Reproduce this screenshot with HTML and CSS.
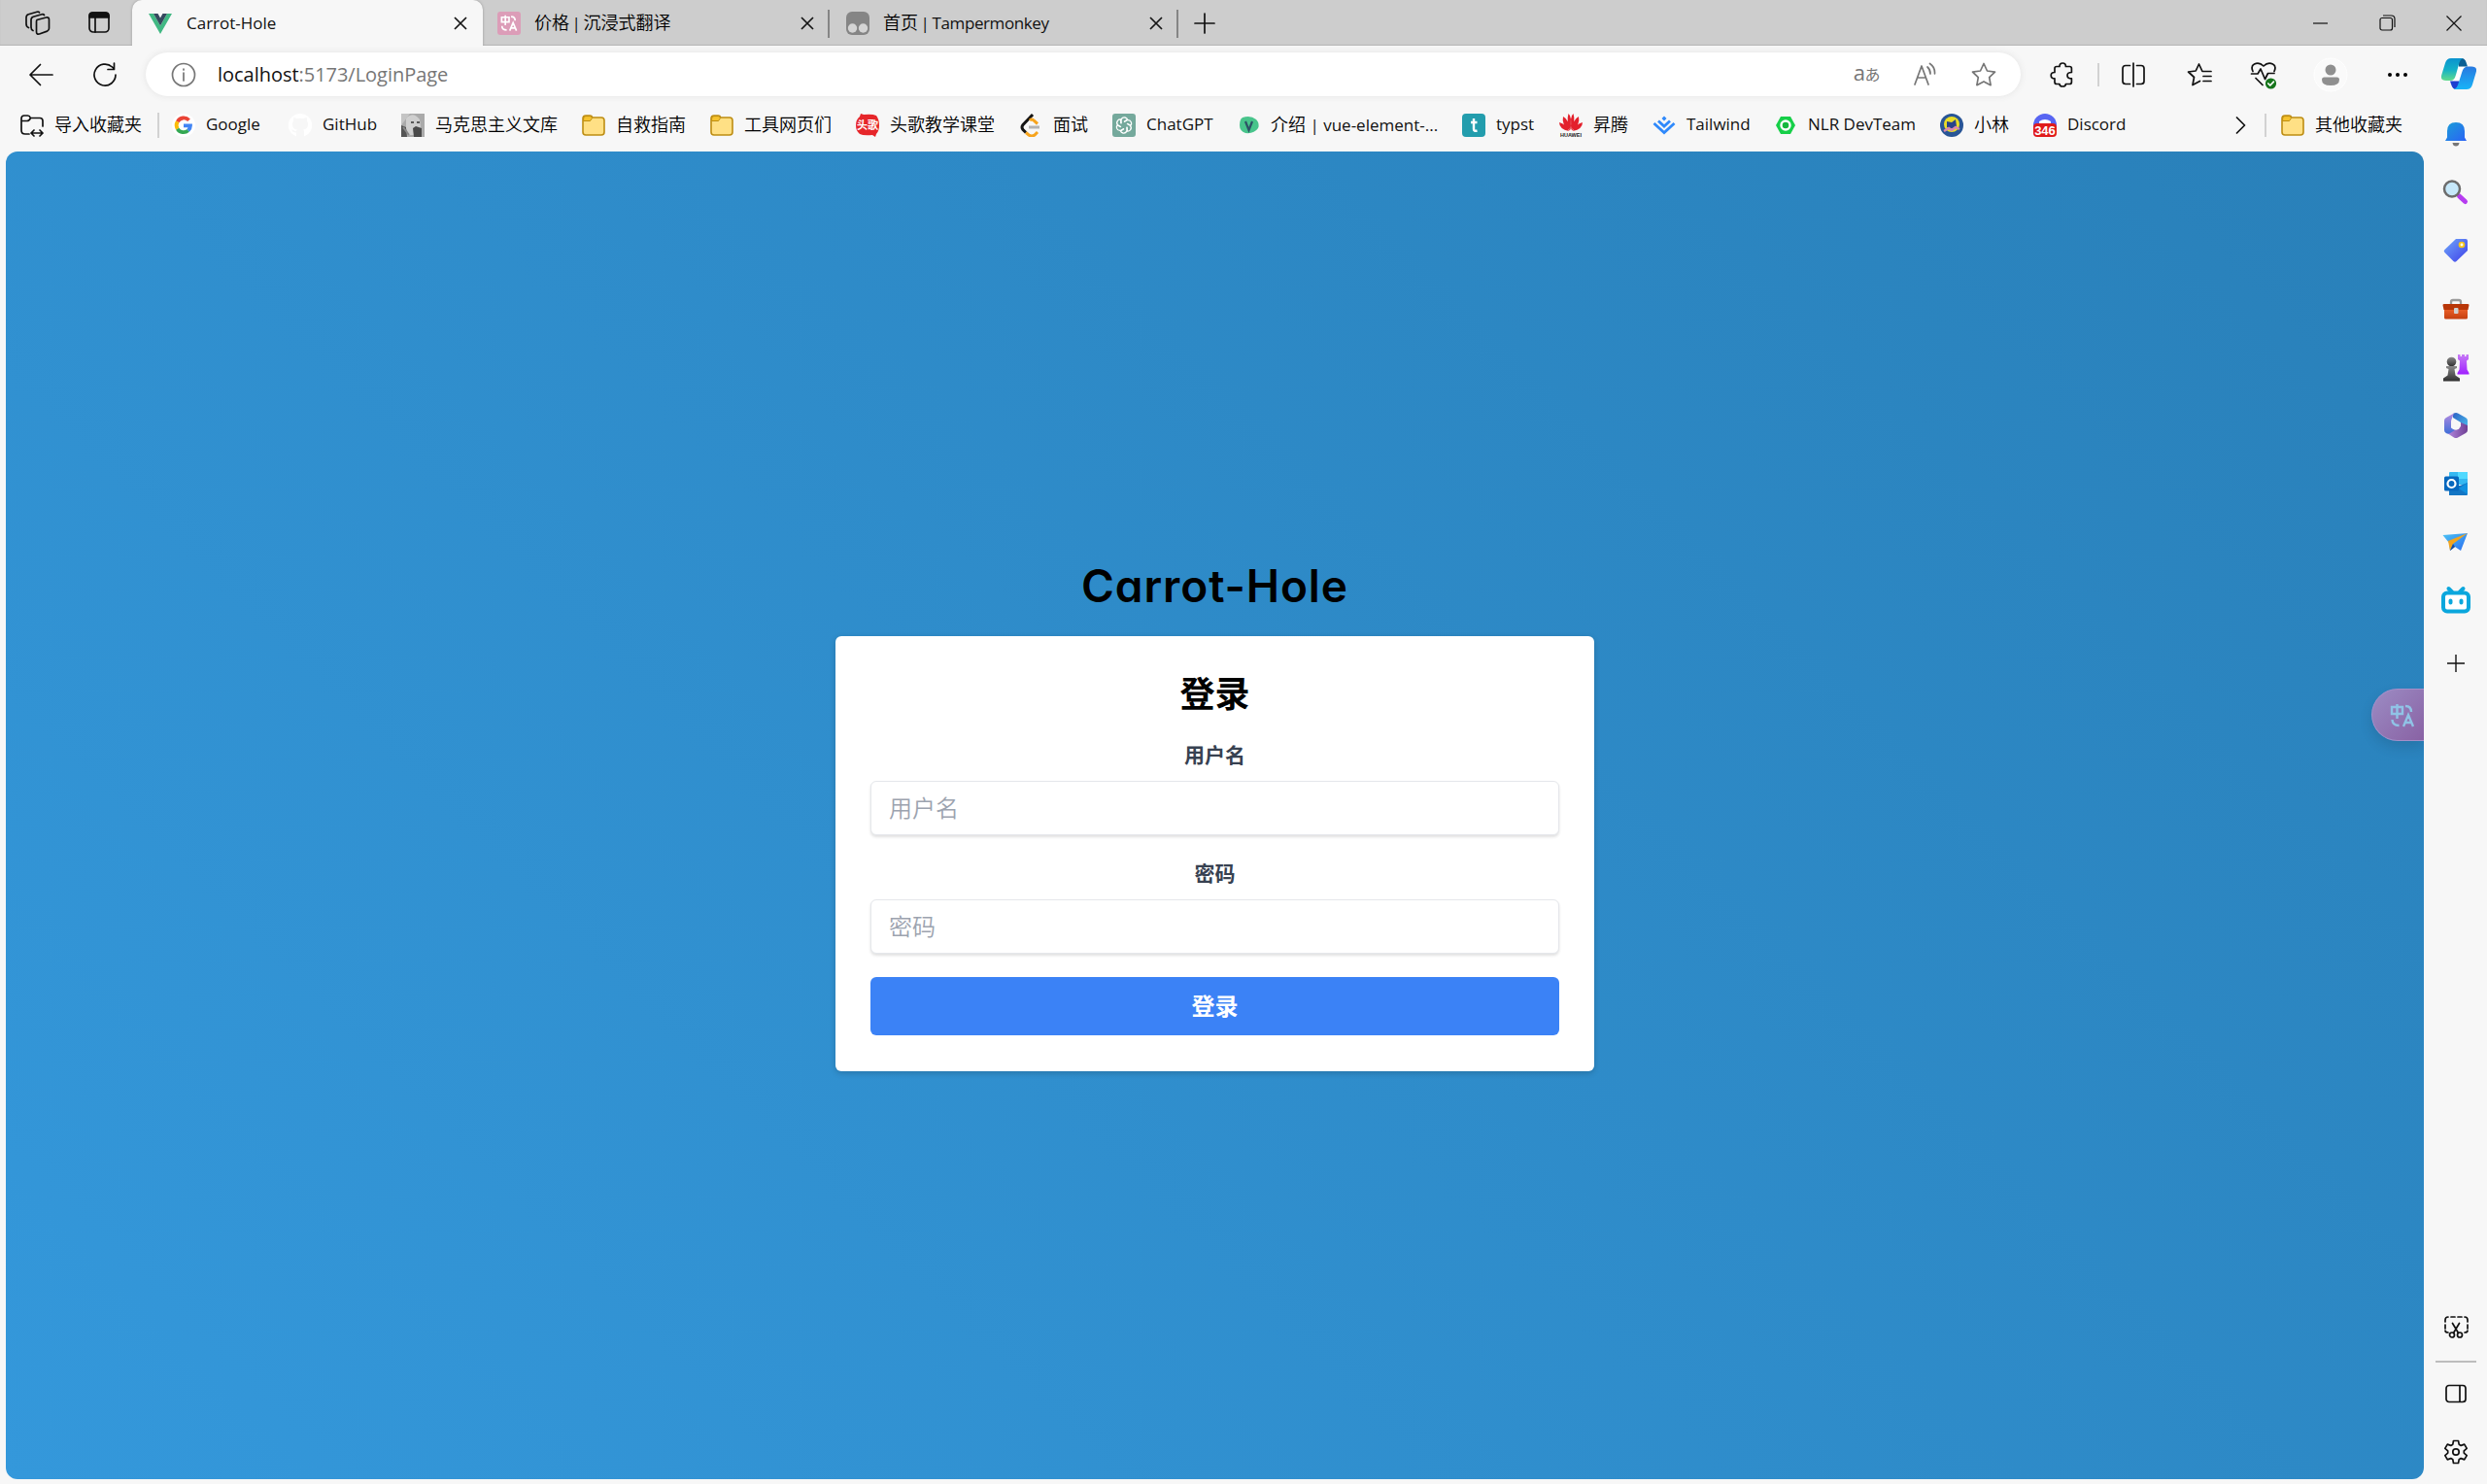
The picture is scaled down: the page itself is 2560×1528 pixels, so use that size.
FILE: index.html
```html
<!DOCTYPE html>
<html lang="zh-CN">
<head>
<meta charset="utf-8">
<title>Carrot-Hole</title>
<link rel="stylesheet" href="styles.css">
</head>
<body>
<svg class="defs" width="0" height="0">
  <defs>
    <linearGradient id="g-bell" x1="0" y1="0" x2="1" y2="1"><stop offset="0" stop-color="#1a9fd8"/><stop offset="1" stop-color="#2b62f5"/></linearGradient>
    <linearGradient id="g-tag" x1="0" y1="0" x2="1" y2="1"><stop offset="0" stop-color="#6fa8fb"/><stop offset="1" stop-color="#3f3fe8"/></linearGradient>
    <linearGradient id="g-box" x1="0" y1="0" x2="0" y2="1"><stop offset="0" stop-color="#f0642c"/><stop offset="1" stop-color="#c43f10"/></linearGradient>
    <linearGradient id="g-rook" x1="0" y1="0" x2="0" y2="1"><stop offset="0" stop-color="#c67af5"/><stop offset="1" stop-color="#a020ff"/></linearGradient>
    <linearGradient id="g-pawn" x1="0" y1="0" x2="0" y2="1"><stop offset="0" stop-color="#8a8a8a"/><stop offset="1" stop-color="#303030"/></linearGradient>
    <linearGradient id="g-cop1" x1="0" y1="0" x2="0" y2="1"><stop offset="0" stop-color="#0a92cf"/><stop offset=".5" stop-color="#12b0c8"/><stop offset="1" stop-color="#62dc8c"/></linearGradient>
    <linearGradient id="g-cop2" x1="0" y1="0" x2="0" y2="1"><stop offset="0" stop-color="#2878e0"/><stop offset="1" stop-color="#18b4f8"/></linearGradient>
    <linearGradient id="g-365a" x1="0" y1="0" x2="0" y2="1"><stop offset="0" stop-color="#b48ae0"/><stop offset="1" stop-color="#3f6fd8"/></linearGradient>
    <linearGradient id="g-365b" x1="0" y1="0" x2="1" y2="1"><stop offset="0" stop-color="#2c62c4"/><stop offset="1" stop-color="#4fc3f0"/></linearGradient>
    <linearGradient id="g-365c" x1="0" y1="0" x2="1" y2="0"><stop offset="0" stop-color="#b48ae0"/><stop offset="1" stop-color="#6f3f94"/></linearGradient>
    <linearGradient id="g-plane" x1="0" y1="0" x2="1" y2="1"><stop offset="0" stop-color="#4cc4f4"/><stop offset="1" stop-color="#2a6cf0"/></linearGradient>
    <symbol id="folder" viewBox="0 0 24 24"><path d="M1 5Q1 2 4 2h4.500q1.500 0 2.500 2h9q3 0 3 3v12q0 3-3 3H4q-3 0-3-3z" fill="#ffe085" stroke="#bd8d12" stroke-width="1.600"/><path d="M1.600 7.500V5Q1.600 2.600 4 2.600h4.200q1.300 0 2.300 2L8.500 7.500z" fill="#f6c32e" stroke="#bd8d12" stroke-width="1"/></symbol>
    <symbol id="close" viewBox="0 0 14 14"><path d="M1 1l12 12M13 1L1 13" fill="none" stroke="#151515" stroke-width="1.700"/></symbol>
    <symbol id="translate" viewBox="0 0 26 26"><path d="M2 4h11v7H2zM7.500 1v15M16 3q6 0 6 6M2.500 17q0 6 7 6M14 24l5-12 5 12M16 20h6" fill="none" stroke="currentColor" stroke-width="2.400"/></symbol>
  </defs>
</svg>
<div class="browser">
  <header class="tabs">
    <div class="tab-tools">
      <svg width="26" height="25" viewBox="0 0 26 25" class="line"><path d="M12 9.500l9.500-2.500q3-.7 3 2.300v9q0 2-2 2.800L14.500 24q-3 .7-3-2.300V11.500q0-1.500.5-2z"/><path d="M8 20.500q-2-.8-2-3.500V9.500q0-2.400 2.300-3.200L17 3.800q1.800-.5 2.500.7M3.500 17.500Q1 16.500 1 13.500V7q0-2.400 2.300-3.200L12 1.200q1.800-.5 2.500.6"/></svg>
      <svg width="24" height="24" viewBox="0 0 24 24" class="line"><rect x="2" y="2" width="20" height="20" rx="4"/><path d="M2 7V5q0-3 3-3h14q3 0 3 3v2z" fill="#111"/><path d="M8 7v15"/></svg>
    </div>
    <div class="tab active">
      <svg width="24" height="24" viewBox="0 0 24 24"><path d="M0 2h5l7 12.500L19 2h5L12 23z" fill="#41b883"/><path d="M5 2h4.500L12 6.500 14.500 2H19l-7 12.500z" fill="#35495e"/></svg>
      <span>Carrot-Hole</span><svg class="x" width="14" height="14"><use href="#close"/></svg>
    </div>
    <div class="tab">
      <svg width="24" height="24" viewBox="0 0 24 24" color="#fff"><rect width="24" height="24" rx="3" fill="#dc9db8"/><use href="#translate" x="3" y="3" width="18" height="18"/></svg>
      <span class="tight"><b>价格</b> | <b>沉浸式翻译</b></span><svg class="x" width="14" height="14"><use href="#close"/></svg>
    </div>
    <div class="tab">
      <svg width="24" height="24" viewBox="0 0 24 24"><rect width="24" height="24" rx="6" fill="#858585"/><circle cx="6.500" cy="17" r="4.700" fill="#d4d4d4"/><circle cx="17.500" cy="17" r="4.700" fill="#d4d4d4"/></svg>
      <span class="tight"><b>首页</b> | <i>Tampermonkey</i></span><svg class="x" width="14" height="14"><use href="#close"/></svg>
    </div>
    <svg class="new-tab line" width="22" height="22" viewBox="0 0 22 22"><path d="M11 1v20M1 11h20"/></svg>
    <div class="window-buttons">
      <svg width="16" height="16" viewBox="0 0 16 16" class="thin"><path d="M0 8h15"/></svg>
      <svg width="17" height="17" viewBox="0 0 17 17" class="thin"><rect x="1" y="3.500" width="12.500" height="12.500" rx="2"/><path d="M4 1h8.500q3.500 0 3.500 3.500V13"/></svg>
      <svg width="16" height="16" viewBox="0 0 16 16" class="thin"><path d="M.5.5l15 15M15.500.5l-15 15"/></svg>
    </div>
  </header>

  <div class="toolbar">
    <svg class="back line" width="26" height="24" viewBox="0 0 26 24"><path d="M25 12H2M12.500 1.500L2 12l10.500 10.500"/></svg>
    <svg class="reload line" width="26" height="26" viewBox="0 0 26 26"><path d="M24 13A11 11 0 1 1 20.500 5L22 6.500M22.500 1v6.500H16"/></svg>
    <div class="address">
      <svg width="26" height="26" viewBox="0 0 26 26" class="line gray"><circle cx="13" cy="13" r="11.500"/><path d="M13 11v8M13 7v1"/></svg>
      <span class="url">localhost<i>:5173/LoginPage</i></span>
      <span class="aa">a<b>あ</b></span>
      <svg class="read line gray" width="25" height="25" viewBox="0 0 25 25"><path d="M1 23L8 4l7 19M3.500 16h9M14 5q3 2.500 3 7M16.500 1.500Q22 5 21.500 12"/></svg>
      <svg class="line gray" width="26" height="26" viewBox="0 0 26 26"><path d="M13 1.500l3.500 7.500 8 1.100-5.800 5.600 1.400 8L13 19.900l-7.100 3.800 1.400-8L1.500 10.100l8-1.100z"/></svg>
    </div>
    <div class="tools">
      <svg width="26" height="26" viewBox="0 0 26 26" class="line"><path d="M7 4.500h3q0-3.500 3.200-3.500t3.200 3.500h4q2 0 2 2v4q-4.400 0-4.400 3.200t4.400 3.200v3.600q0 2-2 2h-4q0 2.500-3.200 2.500T10 22.500H7q-2 0-2-2v-3.600q-3.800 0-3.800-3.200T5 10.500v-4q0-2 2-2z"/></svg>
      <i class="rule"></i>
      <svg width="26" height="26" viewBox="0 0 26 26" class="line"><path d="M13 1v24M9.500 3.500H5Q2 3.500 2 6.500v13q0 3 3 3h4.500M16.500 3.500H21q3 0 3 3v13q0 3-3 3h-4.500"/></svg>
      <svg width="26" height="26" viewBox="0 0 26 26" class="line"><path d="M13.500 19.500L6 23.500l1.500-8L1.500 10l7.700-1L12.500 2 16 9.500h9M17 14.500h8M17 19.500h8"/></svg>
      <svg width="28" height="30" viewBox="0 0 28 30" class="line"><path d="M3 11.500Q.5 6 4.500 4q5-2.500 9.500 2 4.500-4.500 9.500-2 4 2 1.500 7.500M1.500 14h6.500l3-5 4.500 10.500 3-6H25M6 18.500l7 7"/><circle cx="21.500" cy="24" r="5.600" fill="#16751b" stroke="none"/><path d="M18.800 24l2 2 3.600-3.800" stroke="#fff"/></svg>
      <svg width="36" height="36" viewBox="0 0 36 36"><circle cx="18" cy="18" r="17" fill="#fafafa" stroke="#fff"/><circle cx="18" cy="13" r="5.500" fill="#8f8f8f"/><path d="M9 23q0-2.500 2.500-2.500h13q2.500 0 2.500 2.500 0 6-9 6t-9-6z" fill="#8f8f8f"/></svg>
      <svg width="22" height="6" viewBox="0 0 22 6"><circle cx="3" cy="3" r="2"/><circle cx="11" cy="3" r="2"/><circle cx="19" cy="3" r="2"/></svg>
      <svg width="36" height="34" viewBox="0 0 36 34"><path d="M16 9h8l-5 14h-8z" fill="#fff"/><path d="M18 0h3q3 0 4.500 4L27 8.500h-9z" fill="#0b5f94"/><path d="M10 0h12q-2.500 1-3.500 4.500L15 17q-1.500 6-5.500 6H5q-6.500 0-4.700-6L4 5q1.500-5 6-5z" fill="url(#g-cop1)"/><path d="M18 32h-3q-3 0-4.500-4L9 23.500h9z" fill="#1c3fd0"/><path d="M26 32H13q3-1 4-4.500L21 15q1.500-6.500 6-6.500h4q6.500 0 4.700 6L32 27q-1.500 5-6 5z" fill="url(#g-cop2)"/></svg>
    </div>
  </div>

  <nav class="bookmarks">
    <a class="ruled"><svg width="24" height="24" viewBox="0 0 24 24" class="line"><path d="M9 21H5q-4 0-4-4V5q0-3 3-3h3.500q2 0 3 2.500h9.500q3 0 3 3V13M1.500 7.500H7q2 0 3.500-3M11 20h12M14 17l-3 3 3 3M20 17l3 3-3 3"/></svg><b>导入收藏夹</b></a>
    <a><svg width="24" height="24" viewBox="0 0 24 24"><circle cx="12" cy="12" r="12" fill="#fff"/><g fill="none" stroke-width="3.800"><path d="M17.500 6.800A7.300 7.300 0 0 0 5.700 8.300" stroke="#ea4335"/><path d="M5.700 8.300a7.300 7.300 0 0 0 0 7.400" stroke="#fbbc05"/><path d="M5.700 15.700a7.300 7.300 0 0 0 11 1.700" stroke="#34a853"/><path d="M16.700 17.400A7 7 0 0 0 19 12.300h-7" stroke="#4285f4"/></g></svg>Google</a>
    <a><svg width="24" height="24" viewBox="0 0 24 24"><path d="M12 0a12 12 0 0 0-4 23.400v-4c-4 .5-4-2-5-2.800 2-.5 3 2 5 1.500q0-1 .8-1.700C5 16 4 13.500 4 10.500q0-2 1.200-3.300-.4-1.500.2-3.200 2 .2 3.600 1.200 3-.8 6 0Q16.600 4.200 18.600 4q.6 1.700.2 3.200Q20 8.500 20 10.500c0 3-1 5.500-4.800 5.900q.8.800.8 2.500v4.500A12 12 0 0 0 12 0z" fill="#fff"/></svg>GitHub</a>
    <a><svg width="24" height="24" viewBox="0 0 24 24"><rect width="24" height="24" fill="#aaa"/><path d="M0 12l5 2 1 10H0z" fill="#555"/><path d="M5 5q7-8 14 1l1 8-5 8H8L5 15z" fill="#cfcfcf"/><path d="M12 15l3-2 6 2v9h-8z" fill="#4a4a4a"/><path d="M10 9h3M16 9h3" stroke="#333" stroke-width="1.500"/><path d="M0 0h9L3 8 0 12z" fill="#c4c4c4"/><path d="M2 14l6 8" stroke="#888" stroke-width="2"/></svg><b>马克思主义文库</b></a>
    <a><svg width="24" height="24"><use href="#folder"/></svg><b>自救指南</b></a>
    <a><svg width="24" height="24"><use href="#folder"/></svg><b>工具网页们</b></a>
    <a><svg width="24" height="24" viewBox="0 0 24 24"><path d="M5 0l3 1q9-1 13 1 3 4 3 10t-3 9l-1 3-3-2q-9 1-13-1-4-3-4-9T4 3z" fill="#e6262a"/><text x="12" y="16" text-anchor="middle" class="fav-cjk">头歌</text></svg><b>头歌教学课堂</b></a>
    <a><svg width="24" height="24" viewBox="0 0 24 24" fill="none" stroke-width="3"><path d="M14 1L4 11.500q-2 2.500 0 5l3 3" stroke="#151515"/><path d="M11 7q2-2 4 0l4 3.500M7 19.500l3 2.500q3 2 6 0l3-3" stroke="#f7a41d"/><path d="M10 14h11" stroke="#b3b3b3"/></svg><b>面试</b></a>
    <a><svg width="24" height="24" viewBox="0 0 24 24"><rect width="24" height="24" rx="3" fill="#75a99c"/><g fill="none" stroke="#fff" stroke-width="1.300"><path id="petal" d="M9 10.200V6.500Q10 3.500 13 4q2 .5 2.500 2L12 8.500"/><use href="#petal" transform="rotate(60 12 12)"/><use href="#petal" transform="rotate(120 12 12)"/><use href="#petal" transform="rotate(180 12 12)"/><use href="#petal" transform="rotate(240 12 12)"/><use href="#petal" transform="rotate(300 12 12)"/></g></svg>ChatGPT</a>
    <a><svg width="24" height="24" viewBox="0 0 24 24"><path d="M6 4q8-3 14 2 4 4 2 9-4 6-13 5-6-2-6-8t3-8z" fill="#48c48b"/><path d="M9 8l3.500 9L16 8" fill="none" stroke="#2d5265" stroke-width="2.200"/></svg><span><b>介绍</b> | vue-element-...</span></a>
    <a><svg width="24" height="24" viewBox="0 0 24 24"><rect width="24" height="24" rx="4" fill="#239dad"/><path d="M12 5v11q0 2.500 3.500 1.500M9 9h6.500" fill="none" stroke="#fff" stroke-width="2.400"/></svg>typst</a>
    <a><svg width="24" height="24" viewBox="0 0 24 24"><g fill="#e3202c"><path d="M11.500 17Q7 8 9.500 0q4 3 2 17zM12.500 17Q17 8 14.500 0q-4 3-2 17zM11 17.500Q2 12 4 3q6 3 7 14.500zM13 17.500Q22 12 20 3q-6 3-7 14.500zM10 18Q0 16 0 9q7 2 10 9zM14 18q10-2 10-9-7 2-10 9z"/></g><text x="12" y="24" text-anchor="middle" class="fav-huawei">HUAWEI</text></svg><b>昇腾</b></a>
    <a><svg width="24" height="24" viewBox="0 0 24 24" fill="none" stroke="#2f89fb" stroke-width="2.800"><path d="M1.500 10L12 19.500 22.500 10M6 7.500l6 5.500 6-5.500"/><path d="M12 2.500l2.500 2.500L12 7.500 9.500 5z" fill="#2f89fb" stroke="none"/></svg>Tailwind</a>
    <a><svg width="24" height="24" viewBox="0 0 24 24"><path d="M7 3h10l5 9-5 9H7l-5-9z" fill="#16cf48"/><circle cx="12" cy="12" r="4.500" fill="#16b83e" stroke="#fff" stroke-width="2.400"/></svg>NLR DevTeam</a>
    <a><svg width="24" height="24" viewBox="0 0 24 24"><circle cx="12" cy="12" r="12" fill="#285596"/><circle cx="12" cy="11" r="8" fill="#e9dc27"/><path d="M7 8l5 1 4-3 1 7-4 3-6-2z" fill="#28448a"/><path d="M4 18l5-3 3 2 4-3 4 2" stroke="#d887ad" stroke-width="2.400" fill="none"/></svg><b>小林</b></a>
    <a><svg width="24" height="24" viewBox="0 0 24 24"><circle cx="12" cy="12" r="12" fill="#5865f2"/><path d="M6 8q6-4 12 0v4H6z" fill="#fff"/><rect y="10" width="24" height="14" rx="4" fill="#e01b1b"/><text x="12" y="22" text-anchor="middle" class="fav-badge">346</text></svg>Discord</a>
    <svg class="line more" width="11" height="18" viewBox="0 0 11 18"><path d="M1.500 1L9.500 9l-8 8"/></svg>
    <i class="rule"></i>
    <a><svg width="24" height="24"><use href="#folder"/></svg><b>其他收藏夹</b></a>
  </nav>

  <main class="page">
    <h1>Carrot-Hole</h1>
    <form class="card">
      <h2>登录</h2>
      <label for="user">用户名</label>
      <input id="user" type="text" placeholder="用户名">
      <label for="pass">密码</label>
      <input id="pass" type="password" placeholder="密码">
      <button type="button">登录</button>
    </form>
    <div class="float"><svg width="26" height="26"><use href="#translate"/></svg></div>
  </main>

  <aside class="sidebar">
    <svg width="30" height="30" viewBox="0 0 30 30"><path d="M4 22l2-3.500V12q0-9 9-9t9 9v6.500L26 22z" fill="url(#g-bell)"/><path d="M11.500 24h7q-.5 3.500-3.500 3.500T11.500 24z" fill="#777"/></svg>
    <svg width="30" height="30" viewBox="0 0 30 30"><path d="M18.500 19l6 5.500" stroke="#b63cf0" stroke-width="5" stroke-linecap="round"/><circle cx="11" cy="11.500" r="8" fill="#c6e8fa" stroke="#6c6c6c" stroke-width="2.500"/></svg>
    <svg width="30" height="30" viewBox="0 0 30 30"><path d="M15 3h10q2 0 2 2v10L15.500 26q-1.500 1.500-3 0l-9-9q-1.500-1.500 0-3z" fill="url(#g-tag)"/><circle cx="21" cy="9" r="2.400" fill="#fff" stroke="#f3c51c" stroke-width="1.900"/></svg>
    <svg width="30" height="30" viewBox="0 0 30 30"><path d="M10 10V8q0-2 2-2h6q2 0 2 2v2" fill="none" stroke="#9a9a9a" stroke-width="2.300"/><path d="M3 14h24v10q0 1.500-1.500 1.500h-21Q3 25.500 3 24z" fill="url(#g-box)"/><path d="M1.500 11q0-1 1.500-1h24q1.500 0 1.500 1l-1 5h-25z" fill="#b83608"/><rect x="13" y="14" width="4.500" height="6" rx="1" fill="#d0d0d0"/></svg>
    <svg width="30" height="30" viewBox="0 0 30 30"><path d="M17 2h2.500v2H21V2h3v2h1.500V2H28v5l-2 1.500.5 9L28.500 21v1.500h-12V21l2-3.500.5-9L17 7z" fill="url(#g-rook)"/><circle cx="10.500" cy="9.500" r="4.800" fill="url(#g-pawn)"/><path d="M5 14h11v2l-2.500 1 1 6.500 4.500 3v3H2v-3l4.500-3 1-6.500L5 16z" fill="url(#g-pawn)"/></svg>
    <svg width="30" height="30" viewBox="0 0 30 30"><path d="M12 3q3-1.500 5-.5l8 4.500q2 1 2 3v10l-7-4V12l-8-5z" fill="url(#g-365b)"/><path d="M27 15v5q0 2-2 3l-8 4.500q-2 1-4 0L6 23l14-7v-4z" fill="url(#g-365c)"/><path d="M13 2.500L5 7Q3 8 3 10v10q0 2 2 3 2 1 4 0l5-3-4-2.500V12q0-2.500 1-4.500z" fill="url(#g-365a)"/><circle cx="15" cy="15" r="4.700" fill="#f7f7f7"/></svg>
    <svg width="30" height="30" viewBox="0 0 30 30"><path d="M8 4q0-1 1-1h17q1 0 1 1v12H8z" fill="#35b8f1"/><path d="M17 3h9q1 0 1 1v6H17z" fill="#50d9ff"/><path d="M8 17h11l8-3v12q0 1-1 1H8z" fill="#1476c4"/><path d="M18 20l9-6v12z" fill="#1190df"/><rect x="3" y="7.500" width="15" height="15" rx="1.500" fill="#0868be"/><circle cx="10.500" cy="15" r="4" fill="none" stroke="#fff" stroke-width="2.200"/></svg>
    <svg width="30" height="30" viewBox="0 0 30 30"><path d="M1.500 8L27 6l-7 18-6-4-5 4-1-8z" fill="url(#g-plane)"/><path d="M7 14L27 6 12 17l-3 7z" fill="#f4a51c"/><path d="M12 17l-3 7 5-4z" fill="#174b9b"/></svg>
    <svg width="32" height="30" viewBox="0 0 32 30"><rect x="3" y="7.500" width="26" height="19" rx="4" fill="#fff" stroke="#0ba7dd" stroke-width="4"/><path d="M8.500 3l3.500 3.500M23.500 3L20 6.500" stroke="#0ba7dd" stroke-width="4" stroke-linecap="round"/><path d="M10.500 15.500v2M21.500 15.500v2" stroke="#0ba7dd" stroke-width="4" stroke-linecap="round"/></svg>
    <svg class="plus" width="20" height="30" viewBox="0 0 20 30"><path d="M10 6v18M1 15h18" stroke="#111" stroke-width="1.400"/></svg>
    <svg class="snip line" width="26" height="26" viewBox="0 0 26 26"><path d="M2 7V5q0-3 3-3M8 2h4M15 2h4M22 2q3 0 3 3v2M2 10v4M25 10v4M2 16q0 2 3 2M25 16q0 2-3 2M9.500 8.500l6 10M16.500 8.500l-6 10"/><circle cx="9" cy="20.500" r="2.500"/><circle cx="17" cy="20.500" r="2.500"/></svg>
    <hr>
    <svg class="panel line" width="22" height="20" viewBox="0 0 22 20"><rect x="1" y="1.500" width="20" height="17" rx="3"/><path d="M15 2v16"/></svg>
    <svg class="gear line" width="26" height="26" viewBox="0 0 26 26"><path d="M10.500 1.500h5l.7 3.700 2 1.200 3.500-1.300 2.500 4.300-2.900 2.500v2.200l2.900 2.500-2.500 4.300-3.500-1.300-2 1.200-.7 3.700h-5l-.7-3.700-2-1.200-3.500 1.300-2.500-4.300 2.900-2.500v-2.200L1.800 9.400l2.500-4.300 3.500 1.300 2-1.200z"/><circle cx="13" cy="13" r="3.200"/></svg>
  </aside>
</div>
</body>
</html>
```

FILE: styles.css
```css
* { box-sizing: border-box; }
body { margin: 0; font-family: "Open Sans", "Noto Sans CJK SC", sans-serif; font-size: 17px; color: #111; }
svg { display: block; flex: none; }
i { font-style: normal; }
.defs { position: absolute; }
b { font-weight: 350; font-size: 18px; color: #000; line-height: 24px; }
.line { fill: none; stroke: #111; stroke-width: 1.7; stroke-linejoin: round; stroke-linecap: round; }
.thin { fill: none; stroke: #111; stroke-width: 1.2; }
.gray { stroke: #767676; }
.rule { width: 2px; height: 24px; background: #d2d2d2; }

.browser {
  width: 2560px; height: 1528px; overflow: hidden; background: #f7f7f7;
  display: grid;
  grid-template-columns: 2496px 64px;
  grid-template-rows: 47px 59px 50px 1fr;
}

/* tab strip */
.tabs { grid-column: 1 / 3; display: flex; align-items: center; background: #cdcdcd; box-shadow: inset 0 -1px 1px #b5b5b5; }
.tab-tools { width: 136px; display: flex; gap: 38px; padding-left: 26px; }
.tab { position: relative; width: 359px; height: 47px; display: flex; align-items: center; gap: 15px; padding: 0 16px 0 17px; white-space: nowrap; }
.tab span { padding-bottom: 1px; }
.tab .tight { word-spacing: -1.8px; padding-bottom: 2px; margin-left: -1px; }
.tab .tight i { letter-spacing: -.4px; }
.tab.active { width: 361px; background: #f7f7f7; border-radius: 10px 10px 0 0; margin-right: -2px; box-shadow: 0 0 3px #9a9a9a; clip-path: inset(0 -3px 0 -3px); }
.tab .x { margin-left: auto; }
.tab:not(.active)::after { content: ""; position: absolute; right: 0; top: 10px; width: 2px; height: 29px; background: #858585; }
.new-tab { margin-left: 16px; }
.window-buttons { margin-left: auto; display: flex; align-items: center; gap: 52px; padding-right: 26px; }

/* toolbar */
.toolbar { grid-column: 1 / 3; display: flex; align-items: center; }
.back { margin-left: 29px; }
.reload { margin-left: 40px; }
.address { width: 1930px; height: 45px; margin-left: 29px; padding: 0 25px 0 26px; border-radius: 23px; background: #fff; box-shadow: 0 0 7px #e3e3e3; display: flex; flex: none; align-items: center; }
.url { margin-left: 22px; font-size: 20px; padding-bottom: 1px; letter-spacing: -.03px; }
.url i { color: #767676; }
.aa { margin-left: auto; color: #767676; font-size: 22px; line-height: 26px; white-space: nowrap; letter-spacing: -.5px; padding-bottom: 4px; }
.aa b { font-size: 16px; font-weight: 400; color: #767676; }
.read { margin: 0 34px 0 35px; }
.tools { flex: none; display: grid; grid-template-columns: 72px 2px 70px 66px 66px 72px 66px 60px; justify-items: center; align-items: center; margin-left: 7px; }

/* bookmarks */
.bookmarks {
  display: grid; align-items: center; padding: 0 0 5px 21px; white-space: nowrap;
  grid-template-columns: 156px 120px 116px 186px 132px 150px 168px 96px 128px 232px 100px 96px 125px 171px 96px 208px 30px 17px 1fr;
}
.bookmarks a { display: flex; align-items: center; gap: 11px; line-height: 24px; padding-bottom: 1px; }
.bookmarks a > svg { margin-top: 1px; }
.ruled { border-right: 2px solid #d2d2d2; margin-right: 13px; }

.fav-cjk { font: 700 11px "Noto Sans CJK SC", sans-serif; fill: #fff; }
.fav-huawei { font: 700 5.500px "Liberation Sans", sans-serif; fill: #222; }
.fav-badge { font: 700 13px "Liberation Sans", sans-serif; fill: #fff; }

/* login page */
.page {
  position: relative; grid-row: 4; margin: 0 1px 5px 6px; border-radius: 12px; overflow: hidden;
  background: linear-gradient(45deg, #3498db, #2980b9);
  display: flex; flex-direction: column; align-items: center; padding-top: 417px;
}
h1 { flex: none; margin: 0; height: 82px; font: 600 46px/60px Inter, sans-serif; letter-spacing: .9px; font-feature-settings: "cv11"; color: #000; }
.card { flex: none; width: 781px; height: 448px; padding: 33px 36px 36px; background: #fff; border-radius: 6px; box-shadow: 0 2px 6px rgba(0,0,0,.18); display: flex; flex-direction: column; text-align: center; font-family: "Noto Sans CJK SC", sans-serif; }
h2 { margin: 0; font-size: 36px; line-height: 48px; font-weight: 700; color: #000; }
label { margin: 25px 0 13px; line-height: 30px; font-size: 21px; font-weight: 700; color: #374151; }
input { flex: none; margin: 0; height: 56px; padding: 0 18px 3px; border: 1px solid #e5e7eb; border-radius: 6px; font: 350 24px "Noto Sans CJK SC", sans-serif; box-shadow: 0 2px 3px rgba(0,0,0,.12); outline: 0; }
input::placeholder { color: #9ca3af; }
input + label { margin-top: 23px; }
button { flex: none; margin-top: 24px; height: 60px; padding: 0 0 3px; border: 0; border-radius: 6px; background: #3b82f6; color: #fff; font: 700 24px "Noto Sans CJK SC", sans-serif; }
.float { position: absolute; right: 0; top: 553px; width: 54px; height: 54px; padding: 14px 0 0 18px; border-radius: 27px 0 0 27px; background: linear-gradient(135deg, #9c8cc4, #8962a4); border: 1px solid #a48fc8; border-right: 0; color: #90c3e6; box-shadow: 0 6px 14px rgba(0,0,0,.12); }

/* sidebar */
.sidebar { grid-column: 2; grid-row: 3 / 5; display: flex; flex-direction: column; align-items: center; gap: 30px; padding-top: 17px; }
.sidebar .plus { margin-top: 5px; }
.sidebar .snip { margin-top: auto; }
.sidebar hr { width: 42px; height: 2px; margin: -9px 0 -8px; border: 0; background: #bdbdbd; }
.sidebar .panel { margin-bottom: 7px; }
.sidebar .gear { margin-bottom: 20px; }
```
